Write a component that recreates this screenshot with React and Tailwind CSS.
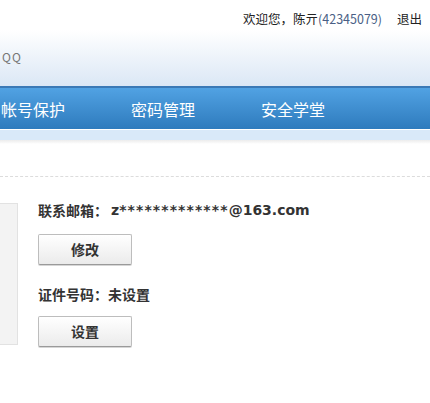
import React from 'react';

const cjk = { fontFamily: '"Noto Sans CJK SC", "Noto Sans", sans-serif' };
const bold = { fontFamily: '"DejaVu Sans", "Noto Sans CJK SC", sans-serif' };

const Btn = ({ children }) => (
    <button
        className="w-[94px] h-[31px] border border-[#bdbdbd] border-b-[#9a9a9a] rounded-[2px] bg-gradient-to-b from-white to-[#ebebeb] text-[14px] font-bold text-[#333] shadow-[0_1px_0_#d6d6d6]"
        style={cjk}
    >
        {children}
    </button>
);

const App = () => {
    return (
        <div className="w-[430px] h-[403px] bg-white overflow-hidden" style={cjk}>
            {/* header */}
            <div className="h-[86px] bg-gradient-to-b from-white from-[35%] to-[#dbe7f5] flex flex-col">
                <div className="h-[38px] flex items-center justify-end pr-[8px] text-[12.5px] text-[#222]">
                    <span>欢迎您，陈亓<span className="text-[#4a5f86]">(42345079)</span></span>
                    <span className="ml-[15px]">退出</span>
                </div>
                <div className="pl-[2px] pt-[10px] text-[12px] text-[#777] tracking-[1px]">QQ</div>
            </div>

            {/* nav */}
            <div className="h-[43px] border-t-2 border-[#3b79b6] bg-gradient-to-b from-[#51a2e3] to-[#2e7bbd] flex items-center text-[16px] text-white">
                <span className="w-[131px] pl-[1px]">帐号保护</span>
                <span className="w-[130px]">密码管理</span>
                <span>安全学堂</span>
            </div>
            <div className="h-[11px] border-t border-white bg-[#d9e9f9]" />
            <div className="h-[4px] bg-gradient-to-b from-[#ececec] to-white" />

            {/* content */}
            <div className="pt-[32px]">
                <div className="border-t border-dashed border-[#dcdcdc]" />
                <div className="flex mt-[26px]">
                    <div className="w-[18px] h-[142px] border border-l-0 border-[#e2e2e2] bg-[#f3f3f3] shrink-0" />
                    <div className="ml-[20px] flex flex-col text-[14px] font-bold text-[#333]">
                        <div className="h-[16px] leading-[16px] -mt-[1px] flex">
                            <span style={cjk}>联系邮箱：</span>
                            <span style={bold} className="ml-[3px]">
                                z<span className="tracking-[1.1px]">*************</span>@163.com
                            </span>
                        </div>
                        <div className="mt-[16px]"><Btn>修改</Btn></div>
                        <div className="mt-[21px] leading-[16px]">证件号码：未设置</div>
                        <div className="mt-[14px]"><Btn>设置</Btn></div>
                    </div>
                </div>
            </div>
        </div>
    );
};

export default App;
